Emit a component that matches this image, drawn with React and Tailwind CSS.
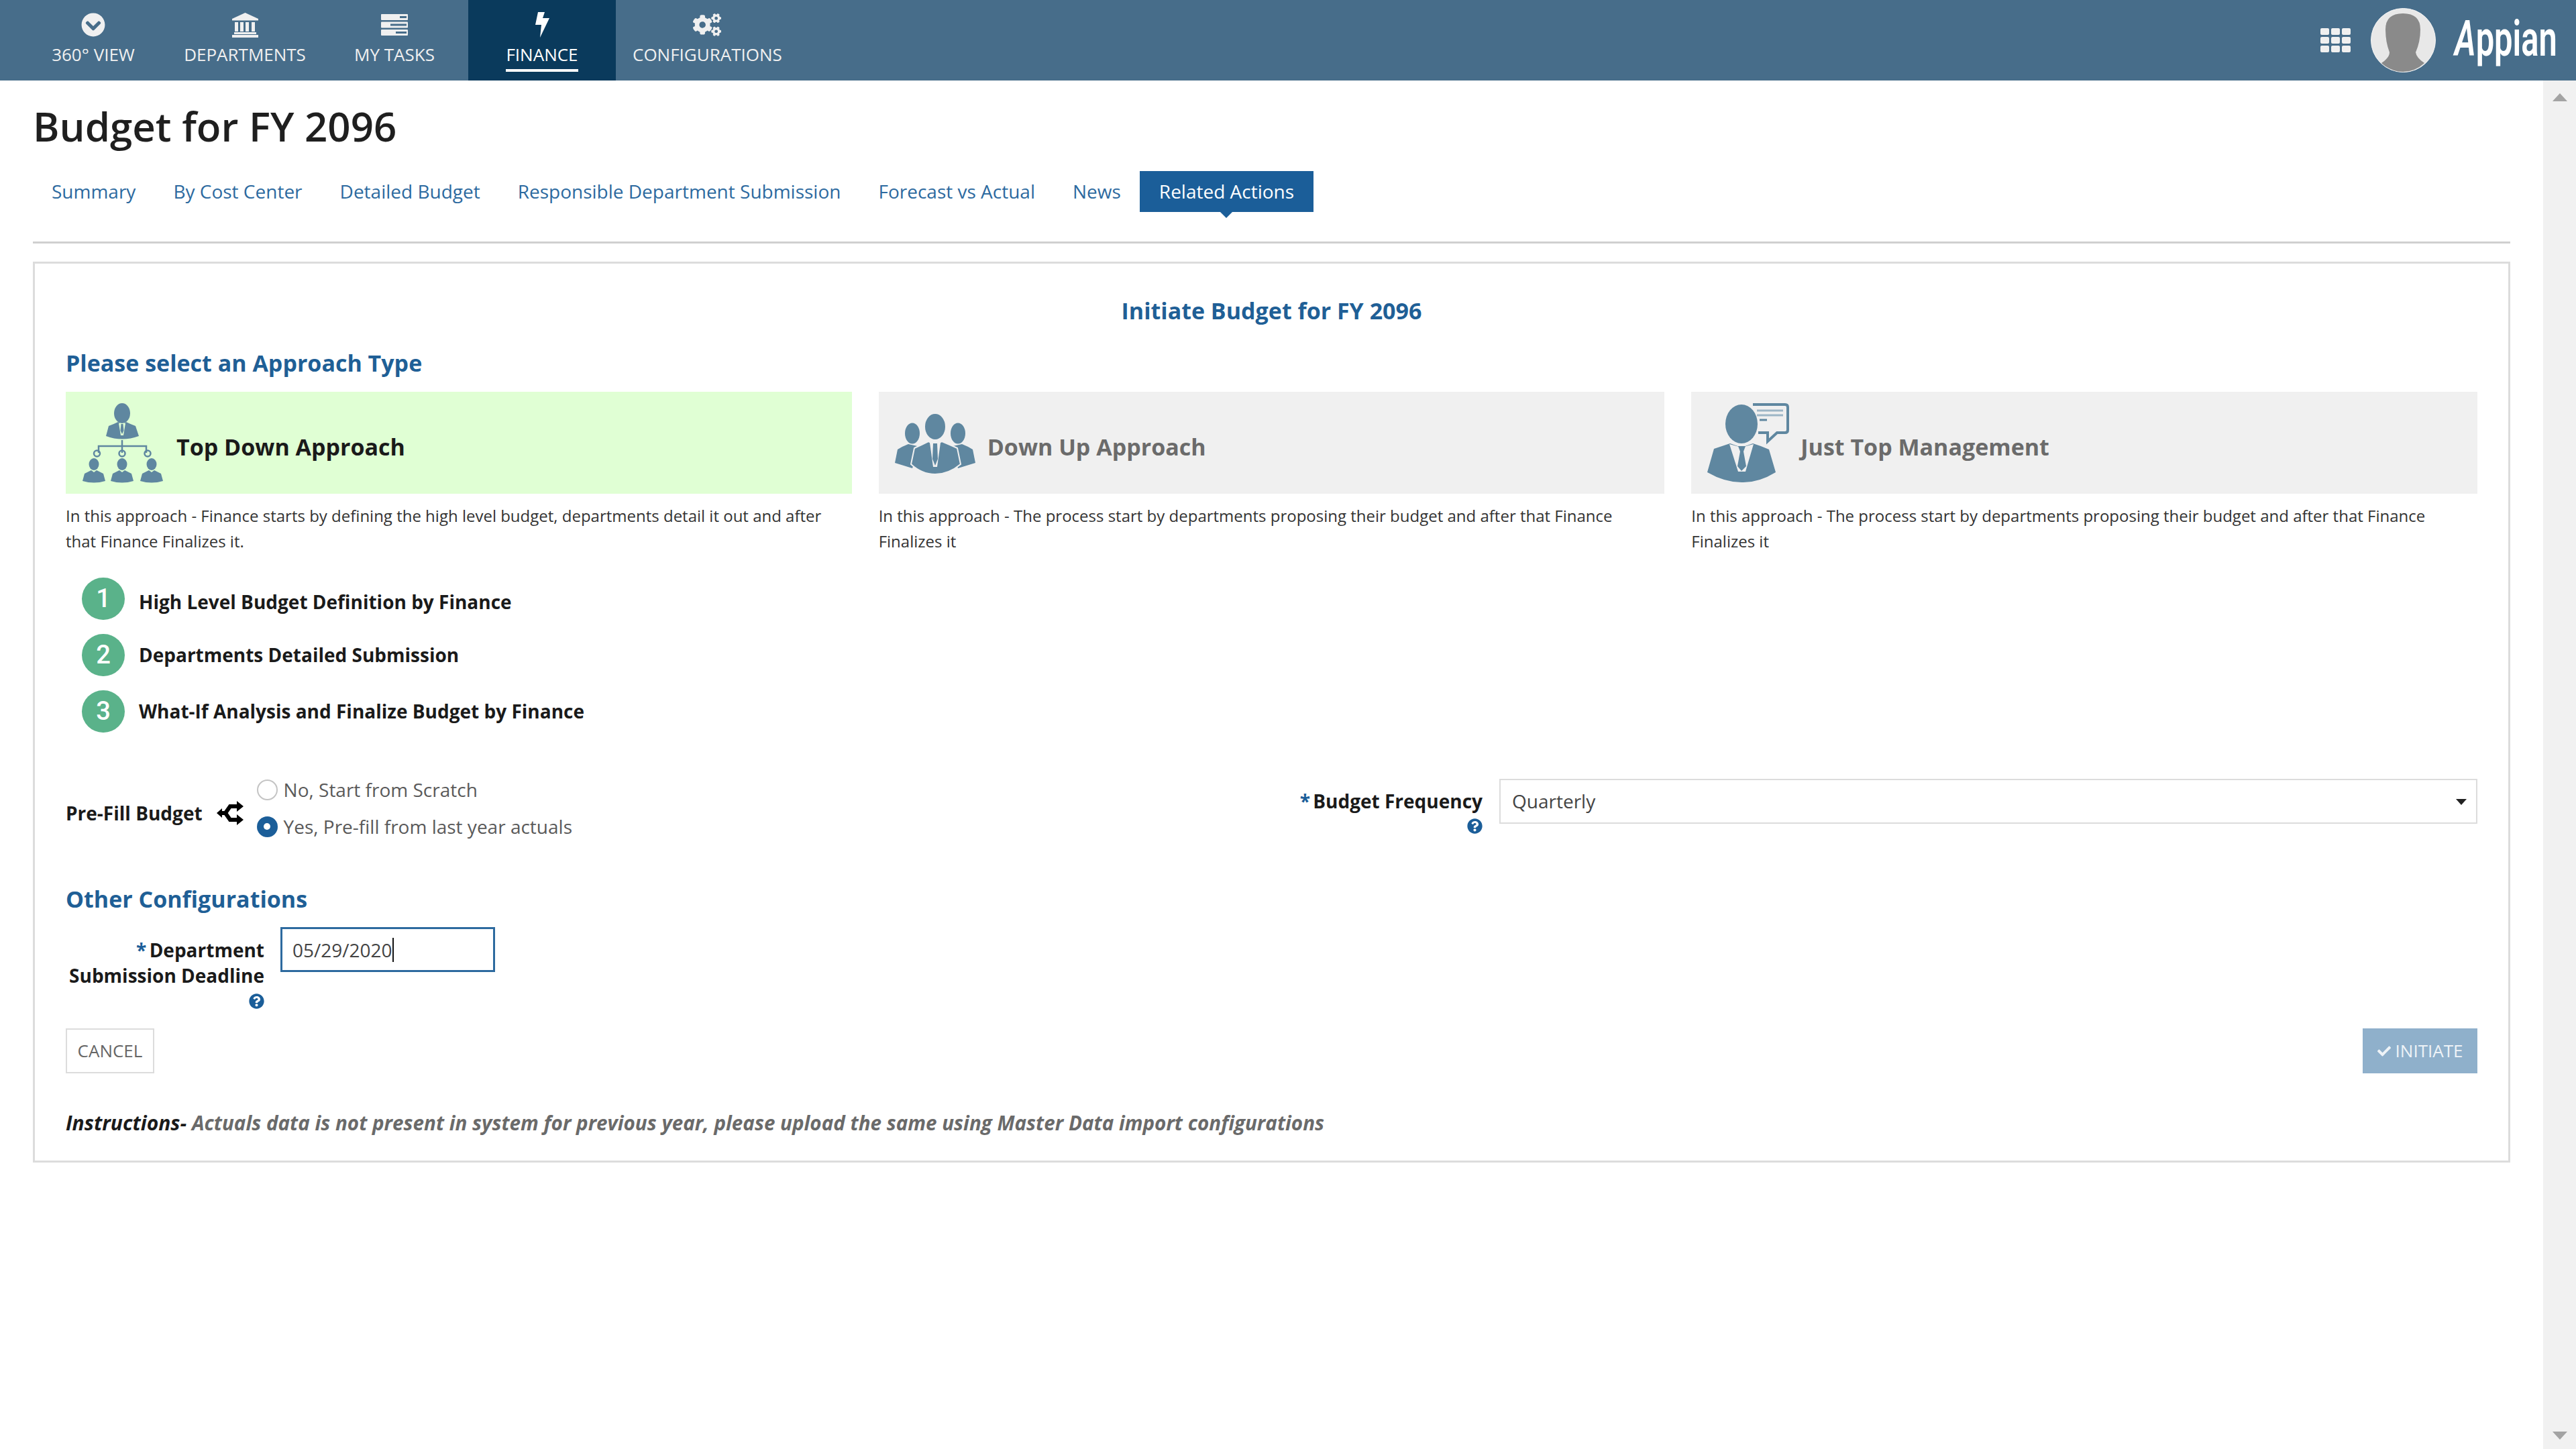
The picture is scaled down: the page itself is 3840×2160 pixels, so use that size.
import React from "react";
import { FaCogs, FaQuestionCircle, FaCheck, FaChevronCircleDown } from "react-icons/fa";

const ICON = "#5f87a0";

function BankIcon() {
  return (
    <svg width="39" height="37" viewBox="0 0 39 37" fill="#f0f0f0">
      <polygon points="19.5,0 39,9 39,11.5 0,11.5 0,9" />
      <rect x="4" y="14" width="5" height="14" />
      <rect x="12" y="14" width="5" height="14" />
      <rect x="20" y="14" width="5" height="14" />
      <rect x="29" y="14" width="5" height="14" />
      <rect x="3" y="29" width="33" height="3" />
      <rect x="0" y="33" width="39" height="4" />
    </svg>
  );
}

function TasksIcon() {
  return (
    <svg width="40" height="32" viewBox="0 0 40 32">
      <rect x="0" y="0" width="40" height="9" rx="1" fill="#f0f0f0" />
      <rect x="0" y="11.5" width="40" height="9" rx="1" fill="#f0f0f0" />
      <rect x="0" y="23" width="40" height="9" rx="1" fill="#f0f0f0" />
      <rect x="28" y="3" width="10" height="3" fill="#476d8a" />
      <rect x="14" y="14.5" width="24" height="3" fill="#476d8a" />
      <rect x="22" y="26" width="16" height="3" fill="#476d8a" />
    </svg>
  );
}

function BoltIcon() {
  return (
    <svg width="21" height="38" viewBox="0 0 21 38" fill="#ffffff">
      <polygon points="4,0 14,0 11,9 21,9 7,38 9,19 0,19" />
    </svg>
  );
}

function TopDownIcon() {
  const small = (x) => (
    <g key={x}>
      <ellipse cx={x} cy="101" rx="7.5" ry="9" />
      <path d={`M${x - 17} 126 L${x - 14} 115 Q${x - 8} 112 ${x - 4} 110 L${x} 113 L${x + 4} 110 Q${x + 8} 112 ${x + 14} 115 L${x + 17} 126 Q${x} 131 ${x - 17} 126Z`} />
    </g>
  );
  return (
    <svg width="150" height="140" viewBox="0 0 150 140" fill={ICON}>
      <ellipse cx="72" cy="25" rx="12" ry="15" />
      <path d="M48 59 L52 44 Q60 41 66 38 L72 42 L78 38 Q84 41 92 44 L97 59 Q72 68 48 59Z" />
      <polygon points="67,40 77,40 74,58 70,58" fill="#e0ffd4" />
      <polygon points="70.5,41 73.5,41 74.5,51 72,56 69.5,51" />
      <path d="M72 65 V74 M37 84 V74 H108 V84 M72 74 V84" fill="none" stroke={ICON} strokeWidth="2.5" />
      <g fill="none" stroke={ICON} strokeWidth="2.5">
        <circle cx="34.5" cy="85" r="4.5" />
        <circle cx="72" cy="85" r="4.5" />
        <circle cx="110" cy="85" r="4.5" />
      </g>
      {[30, 72, 116].map(small)}
    </svg>
  );
}

function DownUpIcon() {
  return (
    <svg width="120" height="91" viewBox="0 0 120 91" fill={ICON}>
      <ellipse cx="26" cy="30" rx="11" ry="15.5" />
      <ellipse cx="94" cy="30" rx="11" ry="15.5" />
      <path d="M0 74 L4 54 Q12 49 20 46 L38 50 L26 82Z" />
      <path d="M120 74 L116 54 Q108 49 100 46 L82 50 L94 82Z" />
      <ellipse cx="60" cy="20" rx="16" ry="20" stroke="#f0f0f0" strokeWidth="2" />
      <path d="M24 76 L29 52 Q40 47 50 42 L60 47 L70 42 Q82 47 93 52 L98 76 Q80 91 60 91 Q40 91 24 76Z" stroke="#f0f0f0" strokeWidth="2" />
      <polygon points="52,44 68,44 63,80 57,80" fill="#f0f0f0" />
      <polygon points="57,45 63,45 64,68 60,78 56,68" />
    </svg>
  );
}

function JustTopIcon() {
  return (
    <svg width="150" height="130" viewBox="0 0 150 130" fill={ICON}>
      <path d="M82 8 H130 Q134 8 134 12 V46 Q134 50 130 50 H118 L104 63 V50 H90" fill="none" stroke={ICON} strokeWidth="4" />
      <path d="M88 17 H127 M88 24 H127" stroke="#9db6c6" strokeWidth="3" />
      <path d="M92 31 H103" stroke={ICON} strokeWidth="3" />
      <ellipse cx="65" cy="37" rx="24" ry="29" />
      <path d="M14 109 L24 74 Q36 70 48 66 L65 72 L82 66 Q95 70 106 75 L116 109 Q90 125 65 124 Q40 124 14 109Z" />
      <polygon points="47,67 65,72 83,67 71,108 60,108" fill="#f0f0f0" />
      <polygon points="60,70 71,70 68,78 72,100 65,107 59,100 63,78" />
    </svg>
  );
}

function SplitIcon() {
  return (
    <svg width="40" height="36" viewBox="0 0 40 36" fill="none" stroke="#000" strokeWidth="6">
      <path d="M4 18 H13 L20 8 H31 M13 18 L20 28 H31" />
      <polygon points="30,0 40,8 30,16" fill="#000" stroke="none" />
      <polygon points="30,20 40,28 30,36" fill="#000" stroke="none" />
      <polygon points="0,18 8,11 8,25" fill="#000" stroke="none" />
    </svg>
  );
}

function AvatarIcon() {
  return (
    <svg width="97" height="96" viewBox="0 0 97 96">
      <ellipse cx="48.5" cy="48" rx="48" ry="47.5" fill="#e8e8e8" stroke="#f4f4f4" strokeWidth="1" />
      <path d="M48 8 Q22 8 22 32 Q22 50 28 66 Q28 74 16 82 Q30 95 48 95 Q66 95 80 82 Q68 74 67 66 Q74 50 74 32 Q74 8 48 8Z" fill="#8a8a8a" />
    </svg>
  );
}

function NavItem({ icon, label, active, className }) {
  return (
    <div className={`flex flex-col items-center h-full ${active ? "bg-[#0a3a5c] text-white" : "text-[#f0f0f0]"} ${className}`}>
      <div className="flex items-center justify-center h-[38px] mt-[18px]">{icon}</div>
      <div className="mt-[12px] h-[26px] text-[26px] leading-[26px] whitespace-nowrap">{label}</div>
      {active && <div className="mt-[9px] h-[4px] w-[108px] bg-white" />}
    </div>
  );
}

function Approach({ selected, icon, title, text, gap }) {
  return (
    <div>
      <div className={`flex items-center h-[152px] ${selected ? "bg-[#e0ffd4]" : "bg-[#f0f0f0]"}`}>
        {icon}
        <div className={`text-[34px] leading-[46px] font-bold pt-[12px] ${selected ? "text-[#1a1a1a]" : "text-[#6b6b6b]"} ${gap}`}>{title}</div>
      </div>
      <p className="mt-[14px] text-[24px] leading-[38px] text-[#333333]">{text}</p>
    </div>
  );
}

function Step({ n, text, pad }) {
  return (
    <div className="flex items-center gap-[21px]">
      <div className="w-[64px] h-[63px] rounded-full bg-[#5ab28a] text-white flex items-center justify-center text-[38px] font-medium font-['Roboto',sans-serif]">{n}</div>
      <div className={`text-[28px] leading-[38px] font-bold text-[#1a1a1a] ${pad}`}>{text}</div>
    </div>
  );
}

function Radio({ checked, label }) {
  return (
    <div className="flex items-center h-[32px] gap-[9px]">
      {checked ? (
        <div className="w-[31px] h-[31px] rounded-full bg-[#1b5e99] flex items-center justify-center">
          <div className="w-[10px] h-[10px] rounded-full bg-white" />
        </div>
      ) : (
        <div className="w-[31px] h-[31px] rounded-full border-2 border-[#c4c4c4] bg-white" />
      )}
      <span className="text-[28px] leading-[32px] text-[#5a5a5a]">{label}</span>
    </div>
  );
}

const TABS = ["Summary", "By Cost Center", "Detailed Budget", "Responsible Department Submission", "Forecast vs Actual", "News"];

export default function App() {
  return (
    <div className="w-[3840px] h-[2160px] flex flex-col bg-white overflow-hidden font-['Open_Sans',sans-serif]">
      <header className="h-[120px] shrink-0 bg-[#476d8a] flex items-stretch">
        <NavItem icon={<FaChevronCircleDown size={36} />} label="360° VIEW" className="w-[226px] ml-[26px]" />
        <NavItem icon={<BankIcon />} label="DEPARTMENTS" className="w-[226px]" />
        <NavItem icon={<TasksIcon />} label="MY TASKS" className="w-[220px]" />
        <NavItem icon={<BoltIcon />} label="FINANCE" active className="w-[220px]" />
        <NavItem icon={<FaCogs size={42} />} label="CONFIGURATIONS" className="px-[25px]" />
        <div className="ml-auto flex items-center pr-[27px]">
          <div className="grid grid-cols-3 gap-[3px]">
            {[0, 1, 2, 3, 4, 5, 6, 7, 8].map((i) => (
              <div key={i} className="w-[13px] h-[10px] rounded-[2px] bg-[#f0f0f0]" />
            ))}
          </div>
          <div className="ml-[30px]"><AvatarIcon /></div>
          <div className="ml-[28px] mb-[4px] w-[154px] h-[80px] text-white font-['Roboto',sans-serif] font-semibold text-[74px] leading-[80px] origin-left scale-x-[0.66] whitespace-nowrap">
            <span className="italic">A</span>ppian
          </div>
        </div>
      </header>

      <div className="flex-1 flex min-h-0">
        <main className="flex-1 pl-[49px] pr-[49px]">
          <h1 className="pt-[28px] h-[110px] text-[60px] leading-[80px] font-semibold text-[#1f1f1f]">Budget for FY 2096</h1>

          <nav className="mt-[25px] h-[61px] flex items-stretch">
            {TABS.map((t) => (
              <div key={t} className="px-[28px] pb-[2px] flex items-center text-[28px] text-[#2d6a9f] whitespace-nowrap">{t}</div>
            ))}
            <div className="relative px-[29px] pb-[2px] flex items-center text-[28px] text-white bg-[#1b5e99] whitespace-nowrap">
              Related Actions
              <div className="absolute left-1/2 -translate-x-1/2 top-full w-0 h-0 border-x-[9px] border-x-transparent border-t-[9px] border-t-[#1b5e99]" />
            </div>
          </nav>

          <div className="mt-[44px] border-t-[3px] border-[#d0d0d0]" />

          <section className="mt-[27px] border-[3px] border-[#dcdcdc] px-[46px] pt-[45px] pb-[31px]">
            <div className="h-[50px] text-center text-[34px] leading-[50px] font-bold text-[#1f5f96]">Initiate Budget for FY 2096</div>
            <div className="mt-[28px] h-[50px] text-[34px] leading-[50px] font-bold text-[#1f5f96]">Please select an Approach Type</div>

            <div className="mt-[18px] grid grid-cols-3 gap-[40px]">
              <Approach selected icon={<div className="ml-[12px] mt-[2px] w-[150px] h-[140px]"><TopDownIcon /></div>} gap="ml-[3px]" title="Top Down Approach" text="In this approach - Finance starts by defining the high level budget, departments detail it out and after that Finance Finalizes it." />
              <Approach icon={<div className="ml-[24px] w-[120px] h-[91px] mt-[3px]"><DownUpIcon /></div>} gap="ml-[18px]" title="Down Up Approach" text="In this approach - The process start by departments proposing their budget and after that Finance Finalizes it" />
              <Approach icon={<div className="ml-[10px] w-[150px] h-[130px]"><JustTopIcon /></div>} gap="ml-[3px]" title="Just Top Management" text="In this approach - The process start by departments proposing their budget and after that Finance Finalizes it" />
            </div>

            <div className="mt-[35px] pl-[24px] flex flex-col gap-[21px]">
              <Step n="1" text="High Level Budget Definition by Finance" pad="pt-[8px]" />
              <Step n="2" text="Departments Detailed Submission" pad="pb-[2px]" />
              <Step n="3" text="What-If Analysis and Finalize Budget by Finance" pad="pb-[2px]" />
            </div>

            <div className="mt-[69px] flex items-start">
              <div className="flex items-center">
                <div className="text-[28px] leading-[38px] font-bold text-[#1a1a1a] pt-[14px] whitespace-nowrap">Pre-Fill Budget</div>
                <div className="ml-[21px] pt-[14px]"><SplitIcon /></div>
                <div className="ml-[20px] flex flex-col gap-[23px]">
                  <Radio label="No, Start from Scratch" />
                  <Radio checked label="Yes, Pre-fill from last year actuals" />
                </div>
              </div>
              <div className="ml-auto flex w-[1758px] gap-[25px]">
                <div className="w-[275px] shrink-0 pt-[14px] text-right">
                  <div className="text-[28px] leading-[38px] font-bold text-[#1a1a1a] whitespace-nowrap"><span className="text-[#1b5e99] mr-[-3px]">* </span>Budget Frequency</div>
                  <div className="mt-[7px] flex justify-end text-[#1b5e99]"><FaQuestionCircle size={23} /></div>
                </div>
                <div className="relative flex-1 h-[67px] border-2 border-[#dcdcdc] flex items-center pl-[17px] pb-[2px] text-[28px] text-[#444444]">
                  Quarterly
                  <div className="absolute right-[14px] top-[28px] w-0 h-0 border-x-[8px] border-x-transparent border-t-[9px] border-t-[#222222]" />
                </div>
              </div>
            </div>

            <div className="mt-[67px] h-[50px] text-[34px] leading-[50px] font-bold text-[#1f5f96]">Other Configurations</div>

            <div className="mt-[17px] flex gap-[24px] items-start">
              <div className="w-[296px] shrink-0 pt-[15px] text-right">
                <div className="text-[28px] leading-[38px] font-bold text-[#1a1a1a]"><span className="text-[#1b5e99] mr-[-3px]">* </span>Department</div>
                <div className="text-[28px] leading-[38px] font-bold text-[#1a1a1a] whitespace-nowrap">Submission Deadline</div>
                <div className="mt-[8px] flex justify-end text-[#1b5e99]"><FaQuestionCircle size={23} /></div>
              </div>
              <div className="w-[320px] h-[67px] border-[3px] border-[#2d6a9f] flex items-center pl-[15px] text-[28px] text-[#444444]">
                <span>05/29/2020</span>
                <span className="w-[2px] h-[36px] bg-[#111111]" />
              </div>
            </div>

            <div className="mt-[29px] flex justify-between">
              <div className="w-[132px] h-[67px] border-2 border-[#dcdcdc] flex items-center justify-center text-[26px] text-[#666666]">CANCEL</div>
              <div className="w-[171px] h-[67px] bg-[#8fb0cb] flex items-center justify-center gap-[7px] text-[26px] font-medium text-[#eef3f7]">
                <FaCheck size={20} />
                <span>INITIATE</span>
              </div>
            </div>

            <div className="mt-[49px] h-[50px] text-[30px] leading-[50px] font-bold italic text-[#6a6a6a] whitespace-nowrap">
              <span className="text-[#1a1a1a]">Instructions- </span><span className="text-[29.6px]">Actuals data is not present in system for previous year, please upload the same using Master Data import configurations</span>
            </div>
          </section>
        </main>

        <aside className="w-[49px] shrink-0 bg-[#f1f1f1] flex flex-col items-center justify-between pt-[19px] pb-[14px]">
          <div className="w-0 h-0 border-x-[11px] border-x-transparent border-b-[12px] border-b-[#a3a3a3]" />
          <div className="w-0 h-0 border-x-[11px] border-x-transparent border-t-[12px] border-t-[#a3a3a3]" />
        </aside>
      </div>
    </div>
  );
}
